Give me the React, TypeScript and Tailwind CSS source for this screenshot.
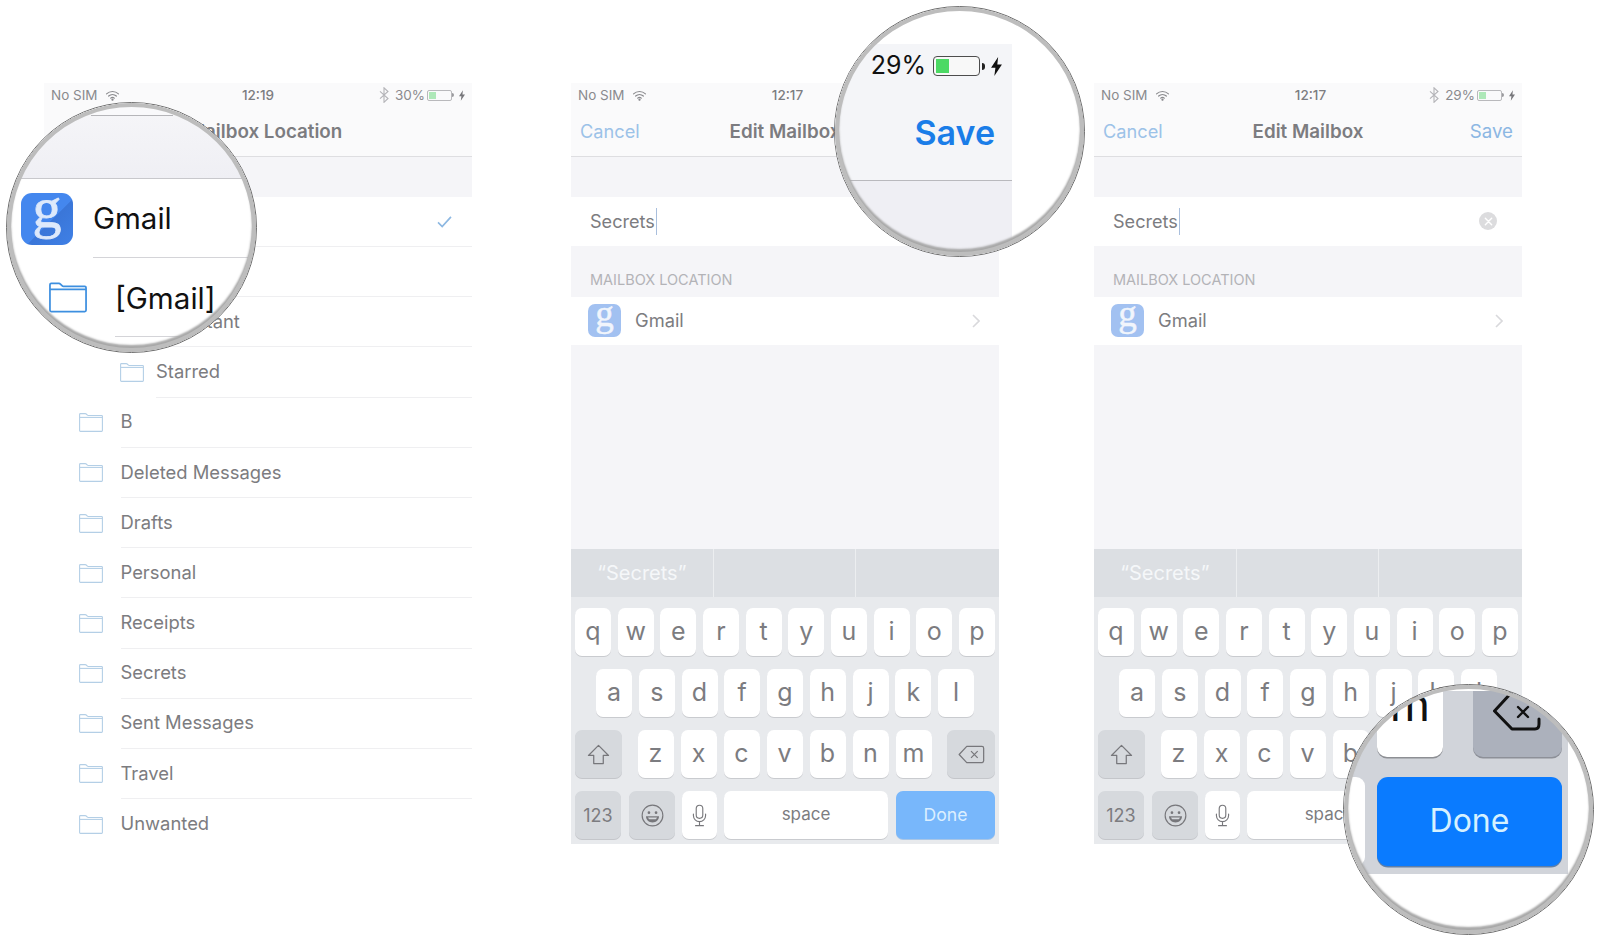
import React from "react";

const FONT = "font-['Inter','Liberation_Sans',sans-serif]";

function Wifi({ className = "" }: { className?: string }) {
  return (
    <svg viewBox="0 0 16 12" className={className} fill="none" stroke="#8a8a8e" strokeWidth="1.3" strokeLinecap="round">
      <path d="M1.5 4.2a9.5 9.5 0 0 1 13 0" />
      <path d="M3.8 6.6a6.2 6.2 0 0 1 8.4 0" />
      <path d="M6 8.9a3 3 0 0 1 4 0" />
      <circle cx="8" cy="10.6" r=".6" fill="#8a8a8e" />
    </svg>
  );
}

function Bluetooth() {
  return (
    <svg viewBox="0 0 10 16" className="w-[10px] h-[16px]" fill="none" stroke="#b4b4b8" strokeWidth="1.1">
      <path d="M1 4.3l8 7.2-4 3.8V.8l4 3.7-8 7.2" />
    </svg>
  );
}

function Bolt({ className = "", color = "#77777b" }: { className?: string; color?: string }) {
  return (
    <svg viewBox="0 0 8 14" className={className} fill={color}>
      <path d="M5.2 0 0 8h3.2L2.4 14 8 5.600H4.600z" />
    </svg>
  );
}

function Battery() {
  return (
    <div className="flex items-center">
      <div className="w-[25px] h-[11px] border border-[#b9b9bc] rounded-[2px] p-px">
        <div className="w-[7px] h-full bg-[#aee8b8]" />
      </div>
      <div className="w-[2px] h-[4px] bg-[#9a9a9e] rounded-r-sm" />
    </div>
  );
}

function Folder({ className = "", color = "#b4cfe6" }: { className?: string; color?: string }) {
  return (
    <svg viewBox="0 0 24 19" className={className} fill="none" stroke={color} strokeWidth="1.1" strokeLinejoin="round">
      <path d="M.6 3.800V1.400c0-.5.3-.8.8-.8h4.900c.4 0 .6.1.9.4l1.200 1.200c.2.2.4.3.7.3h13.500c.5 0 .8.3.8.8v14.300c0 .5-.3.8-.8.8H1.400c-.5 0-.8-.3-.8-.8z" />
      <path d="M.6 4.400h22.800" />
    </svg>
  );
}

function GLogo({ size }: { size: "small" | "big" }) {
  if (size === "big") {
    return (
      <div className="w-[52px] h-[52px] rounded-[11px] bg-[linear-gradient(135deg,#4487ee_55%,#3a76d8_56%,#3f80e6_100%)] flex items-center justify-center shrink-0">
        <span className="font-['Liberation_Serif',serif] text-[58px] leading-[52px] h-[52px] text-[#dde9fb] -mt-[22px] [-webkit-text-stroke:0.8px_#dde9fb]">g</span>
      </div>
    );
  }
  return (
    <div className="w-[33px] h-[33px] rounded-[7px] bg-[#a2c1f1] flex items-center justify-center shrink-0">
      <span className="font-['Liberation_Serif',serif] text-[37px] leading-[33px] h-[33px] text-[#f1f5fc] -mt-[14px] [-webkit-text-stroke:0.5px_#f1f5fc]">g</span>
    </div>
  );
}

function Status({ time, pct, timeClass = "" }: { time: string; pct: string; timeClass?: string }) {
  return (
    <div className="h-[24px] grid grid-cols-3 items-center px-[7px] text-[13.500px] text-[#8a8a8e] bg-[#fafafb]">
      <div className="flex items-center gap-[7px]">
        <span>No SIM</span>
        <Wifi className="w-[15px] h-[11px]" />
      </div>
      <div className={`text-center font-medium text-[#7d7d81] ${timeClass}`}>{time}</div>
      <div className="flex items-center justify-end">
        <Bluetooth />
        <span className="ml-[6px] mr-[2px]">{pct}</span>
        <Battery />
        <Bolt className="ml-[5px] w-[6px] h-[11px]" />
      </div>
    </div>
  );
}

function Nav({ title, cancel, titleClass = "" }: { title: string; cancel?: boolean; titleClass?: string }) {
  return (
    <div className="h-[50px] bg-[#fafafb] border-b border-[#dedee1] flex items-center justify-between px-[9px] pt-[1px]">
      <span className="text-[#9cc2e8] w-[70px] text-[18.200px]">{cancel ? "Cancel" : ""}</span>
      <span className={`font-semibold text-[#7c7c80] text-[18.800px] ${titleClass}`}>{title}</span>
      <span className="text-[#8cb7e3] w-[70px] text-right text-[18.700px]">{cancel ? "Save" : ""}</span>
    </div>
  );
}

const WHITE_KEY = "bg-white shadow-[0_1px_0_#c9cbcf]";
const GRAY_KEY = "bg-[#d6d9dd] shadow-[0_1px_0_#c4c6ca]";

function Key({ c, className = "" }: { c: React.ReactNode; className?: string }) {
  return <div className={`h-[48px] rounded-[7px] flex items-center justify-center ${className}`}>{c}</div>;
}

function KeyRow({ keys }: { keys: string }) {
  return (
    <>
      {keys.split("").map((k) => (
        <Key key={k} c={<span className="-mt-[1px]">{k}</span>} className={`w-[36px] text-[25px] text-[#7c7c80] ${WHITE_KEY}`} />
      ))}
    </>
  );
}

function Keyboard() {
  return (
    <div>
      <div className="h-[48px] bg-[#dcdfe3] grid grid-cols-3 divide-x divide-[#eceef0] text-[20px] text-[#f5f7f9]">
        <div className="flex items-center justify-center pb-[1px]">“Secrets”</div>
        <div />
        <div />
      </div>
      <div className="bg-[#e8eaed] h-[247px] pt-[11px] flex flex-col gap-[13px]">
        <div className="flex justify-between px-[4px]">
          <KeyRow keys="qwertyuiop" />
        </div>
        <div className="flex justify-between px-[25px]">
          <KeyRow keys="asdfghjkl" />
        </div>
        <div className="flex px-[4px] justify-between">
          <Key
            className={`w-[47px] ${GRAY_KEY}`}
            c={
              <svg viewBox="0 0 24 22" className="w-[23px] h-[21px]" fill="none" stroke="#77777b" strokeWidth="1.3" strokeLinejoin="round">
                <path d="M12 1.500 1.500 12H7v8.500h10V12h5.500z" />
              </svg>
            }
          />
          <div className="flex gap-[7px]">
            <KeyRow keys="zxcvbnm" />
          </div>
          <Key
            className={`w-[48px] ${GRAY_KEY}`}
            c={
              <svg viewBox="0 0 28 20" className="w-[27px] h-[19px]" fill="none" stroke="#77777b" strokeWidth="1.3" strokeLinejoin="round">
                <path d="M1 10 9 1.500h16c1 0 1.800.8 1.800 1.800v13.400c0 1-.8 1.800-1.800 1.800H9z" />
                <path d="M13.500 6.500l7 7M20.500 6.500l-7 7" />
              </svg>
            }
          />
        </div>
        <div className="flex px-[4px]">
          <Key className={`w-[46px] text-[18px] text-[#7c7c80] ${GRAY_KEY}`} c="123" />
          <Key
            className={`w-[46px] ml-[8px] ${GRAY_KEY}`}
            c={
              <svg viewBox="0 0 24 24" className="w-[23px] h-[23px]" fill="none" stroke="#77777b" strokeWidth="1.2">
                <circle cx="12" cy="12" r="10.800" />
                <circle cx="8.300" cy="9" r="1.400" fill="#77777b" stroke="none" />
                <circle cx="15.700" cy="9" r="1.400" fill="#77777b" stroke="none" />
                <path d="M5.200 12.800h13.600c0 3.800-3 6.400-6.800 6.400s-6.800-2.600-6.800-6.400z" fill="#77777b" stroke="none" />
                <path d="M7.300 14.200h9.400c-.3 1-.8 1.500-1.300 1.800H8.600c-.5-.3-1-.8-1.300-1.800z" fill="#d6d9dd" stroke="none" />
              </svg>
            }
          />
          <Key
            className={`w-[35px] ml-[7px] ${WHITE_KEY}`}
            c={
              <svg viewBox="0 0 16 24" className="w-[15px] h-[23px]" fill="none" stroke="#77777b" strokeWidth="1.200" strokeLinecap="round">
                <rect x="4.500" y="1" width="7" height="14" rx="3.500" />
                <path d="M1.500 10.500v1.500a6.500 6.500 0 0 0 13 0v-1.500M8 18.500v4M3.800 22.800h8.400" />
              </svg>
            }
          />
          <Key className={`flex-1 ml-[7px] text-[17px] text-[#7c7c80] ${WHITE_KEY}`} c={<span>space</span>} />
          <Key className="w-[99px] ml-[8px] bg-[#78b7fb] shadow-[0_1px_0_#a9c6e6] text-[17.600px] text-[#dcefff]" c="Done" />
        </div>
      </div>
    </div>
  );
}

function EditPanel({ className = "", timeClass = "" }: { className?: string; timeClass?: string }) {
  return (
    <div className={`w-[428px] h-[761px] flex flex-col bg-[#f5f5f8] ${className}`}>
      <Status time="12:17" pct="29%" timeClass={timeClass} />
      <Nav title="Edit Mailbox" cancel />
      <div className="h-[40px] shrink-0" />
      <div className="h-[48.500px] bg-white flex items-center pl-[19px] pr-[25px] text-[18.100px] text-[#7c7c80]">
        <span>Secrets</span>
        <span className="w-[1.500px] h-[27px] bg-[#a9bfdd] ml-px" />
        <span className="ml-auto w-[18px] h-[18px] rounded-full bg-[#dcdcde] flex items-center justify-center">
          <svg viewBox="0 0 10 10" className="w-[9px] h-[9px]" stroke="#fff" strokeWidth="1.600" strokeLinecap="round">
            <path d="M1.500 1.500l7 7M8.500 1.500l-7 7" />
          </svg>
        </span>
      </div>
      <div className="h-[51px] flex items-end pl-[19px] pb-[9px] text-[14.500px] leading-[16px] text-[#b3b3b7]">MAILBOX LOCATION</div>
      <div className="h-[48px] bg-white flex items-center pl-[17px] pr-[19px] text-[18.300px] text-[#7c7c80]">
        <GLogo size="small" />
        <span className="ml-[14px]">Gmail</span>
        <svg viewBox="0 0 8 14" className="ml-auto w-[8px] h-[14px]" fill="none" stroke="#d9d9dc" strokeWidth="1.600">
          <path d="M1 1l6 6-6 6" />
        </svg>
      </div>
      <div className="flex-1" />
      <Keyboard />
    </div>
  );
}

const LIST: { name: string; indent?: boolean }[] = [
  { name: "[Gmail]" },
  { name: "Important", indent: true },
  { name: "Starred", indent: true },
  { name: "B" },
  { name: "Deleted Messages" },
  { name: "Drafts" },
  { name: "Personal" },
  { name: "Receipts" },
  { name: "Secrets" },
  { name: "Sent Messages" },
  { name: "Travel" },
  { name: "Unwanted" },
];

function LocationPanel() {
  return (
    <div className="w-[428px] flex flex-col">
      <Status time="12:19" pct="30%" />
      <Nav title="Mailbox Location" titleClass="ml-[14px]" />
      <div className="h-[40px] bg-[#f5f5f8]" />
      <div className="h-[50px] flex items-center pl-[17px] pr-[20px] border-b border-[#efeff1] text-[18.400px] text-[#7c7c80]">
        <GLogo size="small" />
        <span className="ml-[14px]">Gmail</span>
        <svg viewBox="0 0 16 13" className="ml-auto w-[15px] h-[12px]" fill="none" stroke="#8db8e2" strokeWidth="1.800">
          <path d="M1 7l4.500 4.500L15 1" />
        </svg>
      </div>
      {LIST.map((r, i) => (
        <div key={r.name} className={`h-[50.200px] flex items-center text-[18.400px] text-[#7c7c80] ${r.indent ? "pl-[76px]" : "pl-[35px]"}`}>
          <Folder className="w-[24px] h-[19px] shrink-0" />
          <div className={`h-full flex-1 flex items-center ${r.indent ? "ml-[12px]" : "ml-[17.500px]"} ${i < LIST.length - 1 ? "border-b border-[#efeff1]" : ""}`}>
            {r.name}
          </div>
        </div>
      ))}
    </div>
  );
}

const RING = "pointer-events-none absolute inset-0 rounded-full shadow-[inset_0_0_0_4px_#bdbdbd,inset_0_-3px_2px_4px_#a8a8a8]";
const LENS = "absolute w-[251px] h-[251px] rounded-full bg-white overflow-hidden border border-[#6f6f6f]";

function LensGmail() {
  return (
    <div className={`${LENS} left-[6px] top-[102px] flex flex-col`}>
      <div className="h-[12px] bg-[#f9f9fb] shrink-0" />
      <div className="h-[64px] shrink-0 bg-gradient-to-b from-[#f5f5f8] to-[#efeff4] border-b border-[#c8c8cc]">
        <div className="h-px w-[82px] ml-[84px] bg-[#b5b5b9]" />
      </div>
      <div className="h-[79px] shrink-0 flex items-center pl-[14px]">
        <GLogo size="big" />
        <div className="ml-[20px] h-full flex-1 flex items-center border-b border-[#d4d4d8] text-[29.500px] text-[#111]">Gmail</div>
      </div>
      <div className="h-[79px] shrink-0 flex items-center pl-[42px]">
        <Folder className="w-[38px] h-[31px] shrink-0" color="#3d8fe0" />
        <div className="ml-[28px] h-full flex-1 flex items-center border-b border-[#d4d4d8] text-[29.600px] text-[#111] pt-[2px]">[Gmail]</div>
      </div>
      <div className={RING} />
    </div>
  );
}

function LensSave() {
  return (
    <div className={`${LENS} left-[834px] top-[6px]`}>
      <div className="mt-[37px] w-[177px] h-[213px] bg-[#efeff4] flex flex-col">
        <div className="h-[137px] bg-[#f4f5f8] border-b border-[#b9b9bd] flex flex-col items-end">
          <div className="flex items-center h-[20px] mt-[12px] pr-[10px] text-[25px] text-[#111]">
            <span>29%</span>
            <div className="ml-[7px] w-[47px] h-[20px] rounded-[4px] border border-[#4d4d4d] p-[2px] bg-[#f8f8f8]">
              <div className="w-[13px] h-full bg-[#4cd964]" />
            </div>
            <div className="ml-[2px] w-[3px] h-[7px] bg-[#222] rounded-r-sm" />
            <Bolt className="ml-[6px] w-[11px] h-[19px]" color="#111" />
          </div>
          <div className="mt-[35px] pr-[17px] text-[34px] leading-[44px] font-semibold text-[#1a7de8]">Save</div>
        </div>
      </div>
      <div className={RING} />
    </div>
  );
}

function LensDone() {
  return (
    <div className={`${LENS} left-[1343px] top-[684px]`}>
      <div className="mt-[6px] w-[224px] h-[183px] bg-[#d1d4da] flex flex-col">
        <div className="h-[66px] pl-[33px] flex gap-[30px] shrink-0">
          <div className="w-[66px] h-[66px] bg-white rounded-b-[10px] shadow-[0_1.500px_0_#8d8f94] flex justify-center overflow-hidden">
            <span className="text-[46px] leading-[46px] text-[#111] -mt-[10px]">m</span>
          </div>
          <div className="w-[89px] h-[66px] bg-[#acb1bc] rounded-b-[10px] shadow-[0_1.500px_0_#8d9098] flex justify-center">
            <svg viewBox="0 0 50 40" className="w-[50px] h-[40px]" fill="none" stroke="#111" strokeWidth="3" strokeLinejoin="round" strokeLinecap="round">
              <path d="M19 1 1.500 20 19 38h23c3 0 4-2 4-5v-5" />
              <path d="M25 16l10 10M35 16l-10 10" strokeWidth="2.400" />
            </svg>
          </div>
        </div>
        <div className="flex gap-[12px] mt-[20px]">
          <div className="w-[21px] h-[89px] bg-white rounded-r-[9px]" />
          <div className="w-[185px] h-[89px] rounded-[11px] bg-[#0a7bff] shadow-[0_1.500px_0_#5f7fa8] flex items-center justify-center text-[32px] text-[#d6f1ff] pb-[2px]">
            Done
          </div>
        </div>
      </div>
      <div className={RING} />
    </div>
  );
}

export default function App() {
  return (
    <div className={`relative w-[1600px] h-[941px] overflow-hidden bg-white pt-[83px] pl-[44px] flex items-start ${FONT}`}>
      <LocationPanel />
      <EditPanel className="ml-[99px]" timeClass="pl-[5px]" />
      <EditPanel className="ml-[95px]" timeClass="pl-[5px]" />
      <LensGmail />
      <LensSave />
      <LensDone />
    </div>
  );
}
